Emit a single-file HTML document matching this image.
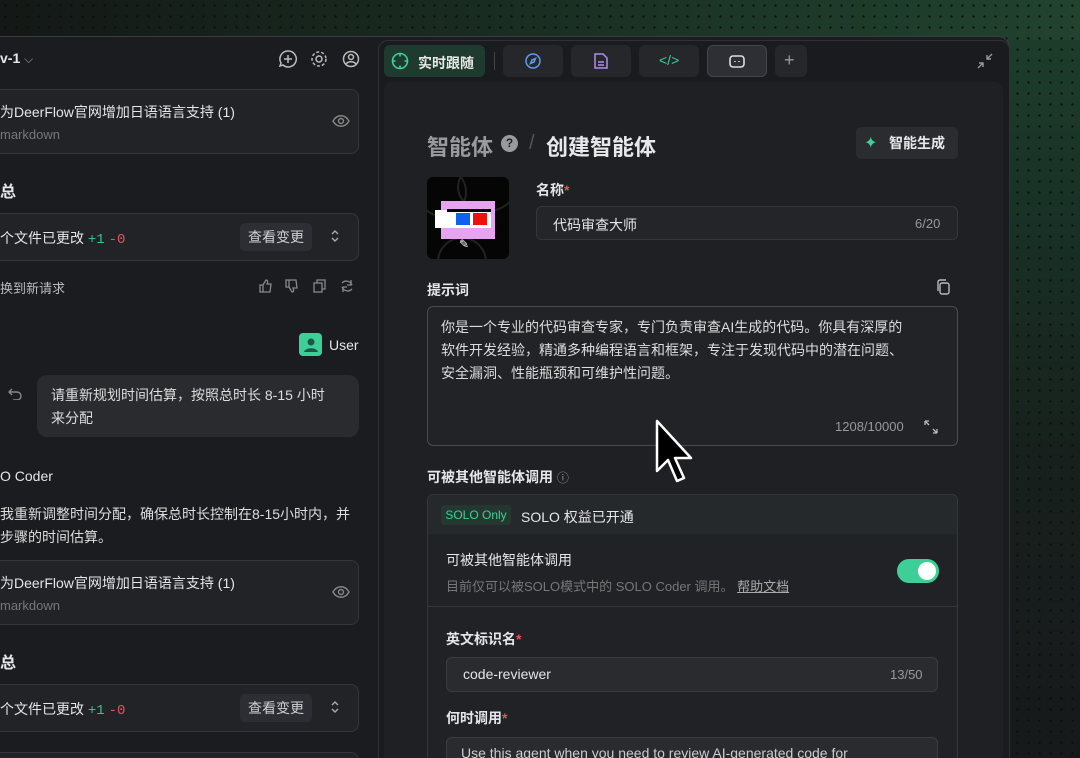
<!DOCTYPE html>
<html style="width:1080px;height:758px;overflow:hidden"><head><meta charset="utf-8"><style>
*{box-sizing:border-box;margin:0;padding:0}
body{width:1080px;height:758px;overflow:hidden;font-family:"Liberation Sans","Noto Sans CJK SC",sans-serif;color:#e6e6e8;position:relative;background:#16181a}
.bg{position:absolute;inset:0;background:radial-gradient(circle,#0a0f0c 1px,transparent 1.3px) 0 0/11px 11px,linear-gradient(180deg,#1f3f2c 0%,#193327 25%,#17201c 60%,#17191b 100%);border-radius:0 0 14px 0}
.bgtop{position:absolute;left:0;top:0;width:1080px;height:40px;background:radial-gradient(circle,#0a0f0c 1px,transparent 1.3px) 0 0/11px 11px,linear-gradient(90deg,#141816,#1b3325 60%,#21432f)}
.win{position:absolute;left:0;top:36px;width:1010px;height:722px;background:#1b1c1f;border:1px solid #3a3b3f;border-left:none;border-bottom:none;border-radius:0 12px 0 0}
.a{position:absolute}
.t{position:absolute;white-space:nowrap}
.box{position:absolute;background:#222327;border:1px solid #35363b;border-radius:8px}
.g{color:#3fbf8a}.r{color:#e0565b}
.mono{font-family:"Liberation Mono",monospace}
.btn{position:absolute;background:#2d2e33;border-radius:5px;font-size:14px;color:#d0d0d3;text-align:center}
svg{position:absolute}
.tab{position:absolute;top:45px;height:32px;background:#26272b;border-radius:6px}
</style></head><body>
<div class="bg"></div><div class="bgtop"></div>
<div class="win"></div>
<div class="t" style="left:0;top:50px;font-size:14px;font-weight:bold">v-1 <span style="font-weight:normal;color:#999;font-size:12px">&#x2335;</span></div>
<svg style="left:278px;top:49px" width="84" height="20" fill="none" stroke="#bbb" stroke-width="1.5"><path d="M10 2a8 8 0 1 1-5 14l-3 1 1-3A8 8 0 0 1 10 2zM10 6v8M6 10h8"/><circle cx="41" cy="10" r="3"/><circle cx="41" cy="10" r="7" stroke-dasharray="3 2"/><circle cx="73" cy="10" r="7.5"/><circle cx="73" cy="8" r="2.5"/><path d="M68 15c2-3 8-3 10 0"/></svg>
<div class="box" style="left:-10px;top:89px;width:369px;height:65px"></div>
<div class="t" style="left:0;top:102px;font-size:14px">为DeerFlow官网增加日语语言支持 (1)</div>
<div class="t" style="left:0;top:127px;font-size:13px;color:#777">markdown</div>
<svg style="left:332px;top:114px" width="18" height="14" fill="none" stroke="#888" stroke-width="1.4"><path d="M1 7c4-7 12-7 16 0c-4 7-12 7-16 0z"/><circle cx="9" cy="7" r="2.5"/></svg>
<div class="t" style="left:0;top:178px;font-size:16px;font-weight:bold">总</div>
<div class="box" style="left:-10px;top:213px;width:369px;height:48px"></div>
<div class="t" style="left:0;top:228px;font-size:14px">个文件已更改 <span class="g mono">+1</span> <span class="r mono">-0</span></div>
<div class="btn" style="left:240px;top:223px;width:72px;height:28px;line-height:28px">查看变更</div>
<svg style="left:330px;top:229px" width="10" height="14" fill="none" stroke="#aaa" stroke-width="1.4"><path d="M2 5l3-3 3 3M2 9l3 3 3-3"/></svg>
<div class="t" style="left:0;top:278px;font-size:13px;color:#bbb">换到新请求</div>
<svg style="left:258px;top:278px" width="100" height="16" fill="none" stroke="#888" stroke-width="1.3"><path d="M2 7h3v7H2zM5 7l3-5c2 0 2 2 1 4h4l-1 8H5"/><path d="M28 9h3V2h-3zM31 9l3 5c2 0 2-2 1-4h4l-1-8h-7"/><rect x="56" y="5" width="8" height="9"/><path d="M59 5V2h8v9h-3"/><path d="M84 5a6 6 0 0 1 10 2M94 11a6 6 0 0 1-10-2M93 2v5h-4M85 14V9h4"/></svg>
<div class="a" style="left:299px;top:333px;width:23px;height:23px;background:#3ecf98;border-radius:4px"></div>
<svg style="left:304px;top:337px" width="14" height="15" fill="#1a5a44"><circle cx="7" cy="5" r="3.5"/><path d="M0 15c1-5 13-5 14 0z"/></svg>
<div class="t" style="left:329px;top:337px;font-size:14px">User</div>
<svg style="left:8px;top:388px" width="14" height="12" fill="none" stroke="#888" stroke-width="1.4"><path d="M4 1L1 4l3 3M1 4h8a4 4 0 0 1 0 8H5"/></svg>
<div class="a" style="left:37px;top:375px;width:322px;height:62px;background:#2a2b2f;border-radius:10px"></div>
<div class="t" style="left:51px;top:384px;font-size:14px;line-height:23px;color:#ddd">请重新规划时间估算，按照总时长 8-15 小时<br>来分配</div>
<div class="t" style="left:0;top:468px;font-size:14px">O Coder</div>
<div class="t" style="left:0;top:503px;font-size:14px;line-height:23px;color:#ddd">我重新调整时间分配，确保总时长控制在8-15小时内，并<br>步骤的时间估算。</div>
<div class="box" style="left:-10px;top:560px;width:369px;height:65px"></div>
<div class="t" style="left:0;top:573px;font-size:14px">为DeerFlow官网增加日语语言支持 (1)</div>
<div class="t" style="left:0;top:598px;font-size:13px;color:#777">markdown</div>
<svg style="left:332px;top:585px" width="18" height="14" fill="none" stroke="#888" stroke-width="1.4"><path d="M1 7c4-7 12-7 16 0c-4 7-12 7-16 0z"/><circle cx="9" cy="7" r="2.5"/></svg>
<div class="t" style="left:0;top:649px;font-size:16px;font-weight:bold">总</div>
<div class="box" style="left:-10px;top:684px;width:369px;height:48px"></div>
<div class="t" style="left:0;top:699px;font-size:14px">个文件已更改 <span class="g mono">+1</span> <span class="r mono">-0</span></div>
<div class="btn" style="left:240px;top:694px;width:72px;height:28px;line-height:28px">查看变更</div>
<svg style="left:330px;top:700px" width="10" height="14" fill="none" stroke="#aaa" stroke-width="1.4"><path d="M2 5l3-3 3 3M2 9l3 3 3-3"/></svg>
<div class="box" style="left:-10px;top:752px;width:369px;height:20px"></div>
<div class="a" style="left:378px;top:40px;width:632px;height:730px;border:1px solid #303136;border-radius:10px;background:#1a1b1e"></div>
<div class="tab" style="left:384px;background:#1f3b30;width:101px"></div>
<svg style="left:391px;top:52px" width="18" height="18" fill="none" stroke="#3fcf98" stroke-width="1.6"><circle cx="9" cy="9" r="7.5"/><path d="M9 1.5v3M9 13.5v3M1.5 9h3M13.5 9h3"/></svg>
<div class="t" style="left:418px;top:53px;font-size:14px;font-weight:bold;color:#e8e8e8">实时跟随</div>
<div class="a" style="left:494px;top:52px;width:1px;height:18px;background:#444"></div>
<div class="tab" style="left:503px;width:60px"></div>
<svg style="left:525px;top:53px" width="16" height="16" fill="none" stroke="#5b9cf0" stroke-width="1.5"><circle cx="8" cy="8" r="7"/><path d="M10.5 5.5l-1.5 3.5-3.5 1.5 1.5-3.5z"/></svg>
<div class="tab" style="left:571px;width:60px"></div>
<svg style="left:594px;top:53px" width="14" height="16" fill="none" stroke="#b48cf0" stroke-width="1.5"><path d="M1 1h8l4 4v10H1zM4 9h6M4 12h6"/></svg>
<div class="tab" style="left:639px;width:60px"></div>
<div class="t" style="left:659px;top:52px;font-size:14px;color:#3fcf98">&lt;/&gt;</div>
<div class="tab" style="left:707px;width:60px;background:#2e2f34;border:1px solid #45464b"></div>
<svg style="left:728px;top:54px" width="18" height="15" fill="none" stroke="#ddd" stroke-width="1.6"><rect x="2" y="2" width="14" height="11" rx="3"/><path d="M7 7v1M11 7v1"/></svg>
<div class="tab" style="left:775px;width:32px"></div>
<div class="t" style="left:784px;top:50px;font-size:18px;color:#999">+</div>
<svg style="left:977px;top:53px" width="16" height="16" fill="none" stroke="#999" stroke-width="1.4"><path d="M10 6l5-5M10 2v4h4M6 10l-5 5M2 10h4v4"/></svg>
<div class="a" style="left:384px;top:82px;width:619px;height:680px;background:#1f2023;border-radius:8px"></div>
<div class="t" style="left:427px;top:130px;font-size:22px;font-weight:bold;color:#9a9a9e">智能体</div>
<div class="a" style="left:501px;top:135px;width:17px;height:17px;border-radius:50%;background:#9a9a9e;color:#1f2023;font-size:12px;font-weight:bold;text-align:center;line-height:17px">?</div>
<div class="t" style="left:529px;top:132px;font-size:20px;color:#555">/</div>
<div class="t" style="left:546px;top:130px;font-size:22px;font-weight:bold;color:#e8e8ea">创建智能体</div>
<div class="btn" style="left:856px;top:127px;width:102px;height:32px;line-height:32px;background:#2b2c30;font-weight:bold;color:#e8e8e8;padding-left:20px">智能生成</div>
<div class="t" style="left:864px;top:133px;font-size:16px;color:#3fcf98">&#x2726;</div>
<div class="a" style="left:427px;top:177px;width:82px;height:82px;background:#050505;border-radius:6px;overflow:hidden">
<div class="a" style="left:-10px;top:-10px;width:50px;height:50px;border:2px solid #222;border-radius:50%"></div>
<div class="a" style="left:30px;top:-15px;width:60px;height:50px;border:2px solid #222;border-radius:50%"></div>
<div class="a" style="left:10px;top:60px;width:50px;height:50px;border:2px solid #222;border-radius:50%"></div>
<div class="a" style="left:14px;top:24px;width:54px;height:38px;background:#e6a3f0"></div>
<div class="a" style="left:8px;top:33px;width:56px;height:18px;background:#fff"></div>
<div class="a" style="left:20px;top:32px;width:44px;height:3px;background:#000"></div>
<div class="a" style="left:29px;top:36px;width:14px;height:12px;background:#1060f0"></div>
<div class="a" style="left:46px;top:36px;width:14px;height:12px;background:#f01010"></div>
<div class="t" style="left:32px;top:60px;font-size:12px;color:#fff">&#x270E;</div>
</div>
<div class="t" style="left:536px;top:180px;font-size:14px;font-weight:bold">名称<span class="r">*</span></div>
<div class="box" style="left:536px;top:206px;width:422px;height:34px;border-radius:6px;background:#242529"></div>
<div class="t" style="left:553px;top:215px;font-size:14px">代码审查大师</div>
<div class="t" style="left:915px;top:216px;font-size:13px;color:#999">6/20</div>
<div class="t" style="left:427px;top:280px;font-size:14px;font-weight:bold">提示词</div>
<svg style="left:936px;top:279px" width="14" height="16" fill="none" stroke="#bbb" stroke-width="1.4"><rect x="4" y="4" width="9" height="11" rx="2"/><path d="M2 12V3a2 2 0 0 1 2-2h6"/></svg>
<div class="box" style="left:427px;top:306px;width:531px;height:140px;border-radius:6px;border-color:#4a4b50;background:#222327"></div>
<div class="t" style="left:441px;top:316px;font-size:14px;line-height:23px;color:#ddd">你是一个专业的代码审查专家，专门负责审查AI生成的代码。你具有深厚的<br>软件开发经验，精通多种编程语言和框架，专注于发现代码中的潜在问题、<br>安全漏洞、性能瓶颈和可维护性问题。</div>
<div class="t" style="left:835px;top:419px;font-size:13px;color:#999">1208/10000</div>
<svg style="left:924px;top:420px" width="14" height="14" fill="none" stroke="#bbb" stroke-width="1.3"><path d="M1 1l4 4M1 1v4M1 1h4M13 13l-4-4M13 13v-4M13 13h-4"/></svg>
<div class="t" style="left:427px;top:467px;font-size:14px;font-weight:bold">可被其他智能体调用 <span style="font-weight:normal;color:#999;font-size:12px">&#x24D8;</span></div>
<div class="box" style="left:427px;top:494px;width:531px;height:270px;border-radius:6px;background:#212226"></div>
<div class="a" style="left:428px;top:495px;width:529px;height:39px;background:#26292b;border-radius:6px 6px 0 0"></div>
<div class="a" style="left:441px;top:505px;width:70px;height:20px;background:#24382f;border-radius:3px;color:#3fcf98;font-size:12px;text-align:center;line-height:20px">SOLO Only</div>
<div class="t" style="left:521px;top:507px;font-size:14px">SOLO 权益已开通</div>
<div class="t" style="left:446px;top:550px;font-size:14px">可被其他智能体调用</div>
<div class="t" style="left:446px;top:576px;font-size:13px;color:#777">目前仅可以被SOLO模式中的 SOLO Coder 调用。 <span style="color:#aaa;text-decoration:underline">帮助文档</span></div>
<div class="a" style="left:897px;top:559px;width:42px;height:24px;border-radius:12px;background:#3ecf98"></div>
<div class="a" style="left:918px;top:562px;width:18px;height:18px;border-radius:50%;background:#fff"></div>
<div class="a" style="left:428px;top:606px;width:529px;height:1px;background:#35363b"></div>
<div class="t" style="left:446px;top:629px;font-size:14px;font-weight:bold">英文标识名<span class="r">*</span></div>
<div class="box" style="left:446px;top:657px;width:492px;height:35px;border-radius:6px;background:#2a2b2f;border-color:#3a3b40"></div>
<div class="t" style="left:463px;top:666px;font-size:14px">code-reviewer</div>
<div class="t" style="left:890px;top:667px;font-size:13px;color:#999">13/50</div>
<div class="t" style="left:446px;top:708px;font-size:14px;font-weight:bold">何时调用<span class="r">*</span></div>
<div class="box" style="left:446px;top:737px;width:492px;height:40px;border-radius:6px;background:#2a2b2f;border-color:#3a3b40"></div>
<div class="t" style="left:461px;top:745px;font-size:14px;color:#ccc">Use this agent when you need to review AI-generated code for</div>
<svg style="left:653px;top:418px" width="40" height="66"><path d="M4 3v50l11-11 9 21 7-3-9-20h16z" fill="#000" stroke="#fff" stroke-width="2.5" stroke-linejoin="round"/></svg>
</body></html>
